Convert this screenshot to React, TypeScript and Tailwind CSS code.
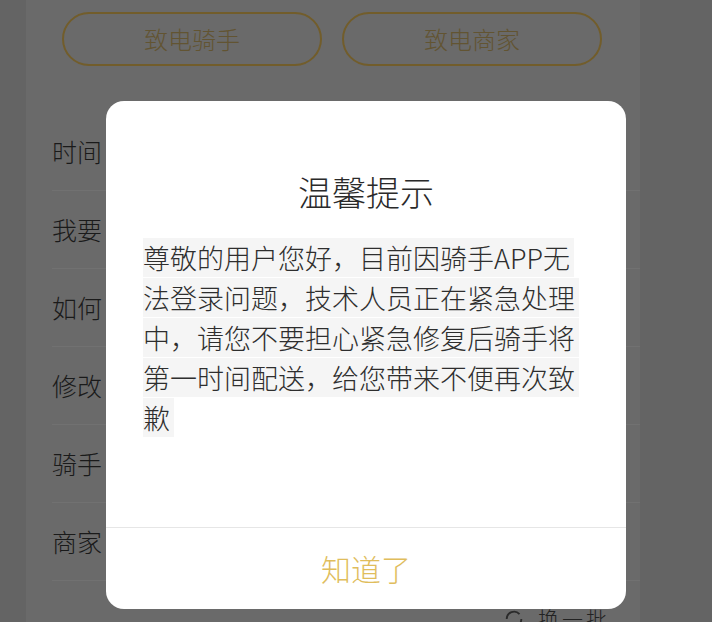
import React from "react";

const font = { fontFamily: '"Noto Sans CJK SC", "Noto Sans", sans-serif' };

const rows = ["时间", "我要", "如何", "修改", "骑手", "商家"];
const lines = [
  "尊敬的用户您好，目前因骑手APP无",
  "法登录问题，技术人员正在紧急处理",
  "中，请您不要担心紧急修复后骑手将",
  "第一时间配送，给您带来不便再次致",
  "歉",
];

export default function App() {
  return (
    <div className="relative w-[712px] h-[622px] overflow-hidden bg-[#646464]" style={font}>
      <div className="ml-[26px] w-[614px] h-full bg-[#6a6a6a] flex flex-col">
        <div className="flex gap-[20px] pt-[12px] pl-[36px]">
          <div className="w-[260px] h-[54px] rounded-full border-2 border-[#725d2b] flex items-center justify-center text-[24px] font-light text-[#625432]">
            致电骑手
          </div>
          <div className="w-[260px] h-[54px] rounded-full border-2 border-[#725d2b] flex items-center justify-center text-[24px] font-light text-[#625432]">
            致电商家
          </div>
        </div>
        <div className="mt-[47px] pl-[26px] flex flex-col">
          {rows.map((r) => (
            <div key={r} className="h-[78px] border-b border-[#717171] flex items-center text-[25px] font-light text-[#1a1a1a]">
              {r}
            </div>
          ))}
        </div>
        <div className="flex justify-end items-start pr-[30px] pt-[27px] gap-[13px] text-[21px] font-light text-[#222] leading-none">
          <svg width="22" height="22" viewBox="0 0 24 24" fill="none" stroke="#2a2a2a" strokeWidth="2">
            <path d="M4 12a8 8 0 0 1 14-5.3" />
            <path d="M20 12a8 8 0 0 1-14 5.3" />
          </svg>
          <span className="tracking-[3px]">换一批</span>
        </div>
      </div>

      <div className="absolute left-[106px] top-[101px] w-[520px] h-[508px] rounded-[18px] bg-white flex flex-col">
        <div className="pt-[70px] text-center text-[34px] leading-[41px] font-light text-[#2a2a2a]">温馨提示</div>
        <div className="mt-[26px] pl-[37px] flex-1 text-[27px] leading-[40px] font-light text-[#2e2e2e] whitespace-nowrap">
          {lines.map((l, i) => (
            <div key={i}>
              <span className="bg-[#f5f5f5] pr-[4px]">{l}</span>
            </div>
          ))}
        </div>
        <div className="h-[82px] border-t border-[#e6e6e6] flex items-center justify-center text-[30px] font-light text-[#e0bd5c]">
          知道了
        </div>
      </div>
    </div>
  );
}
